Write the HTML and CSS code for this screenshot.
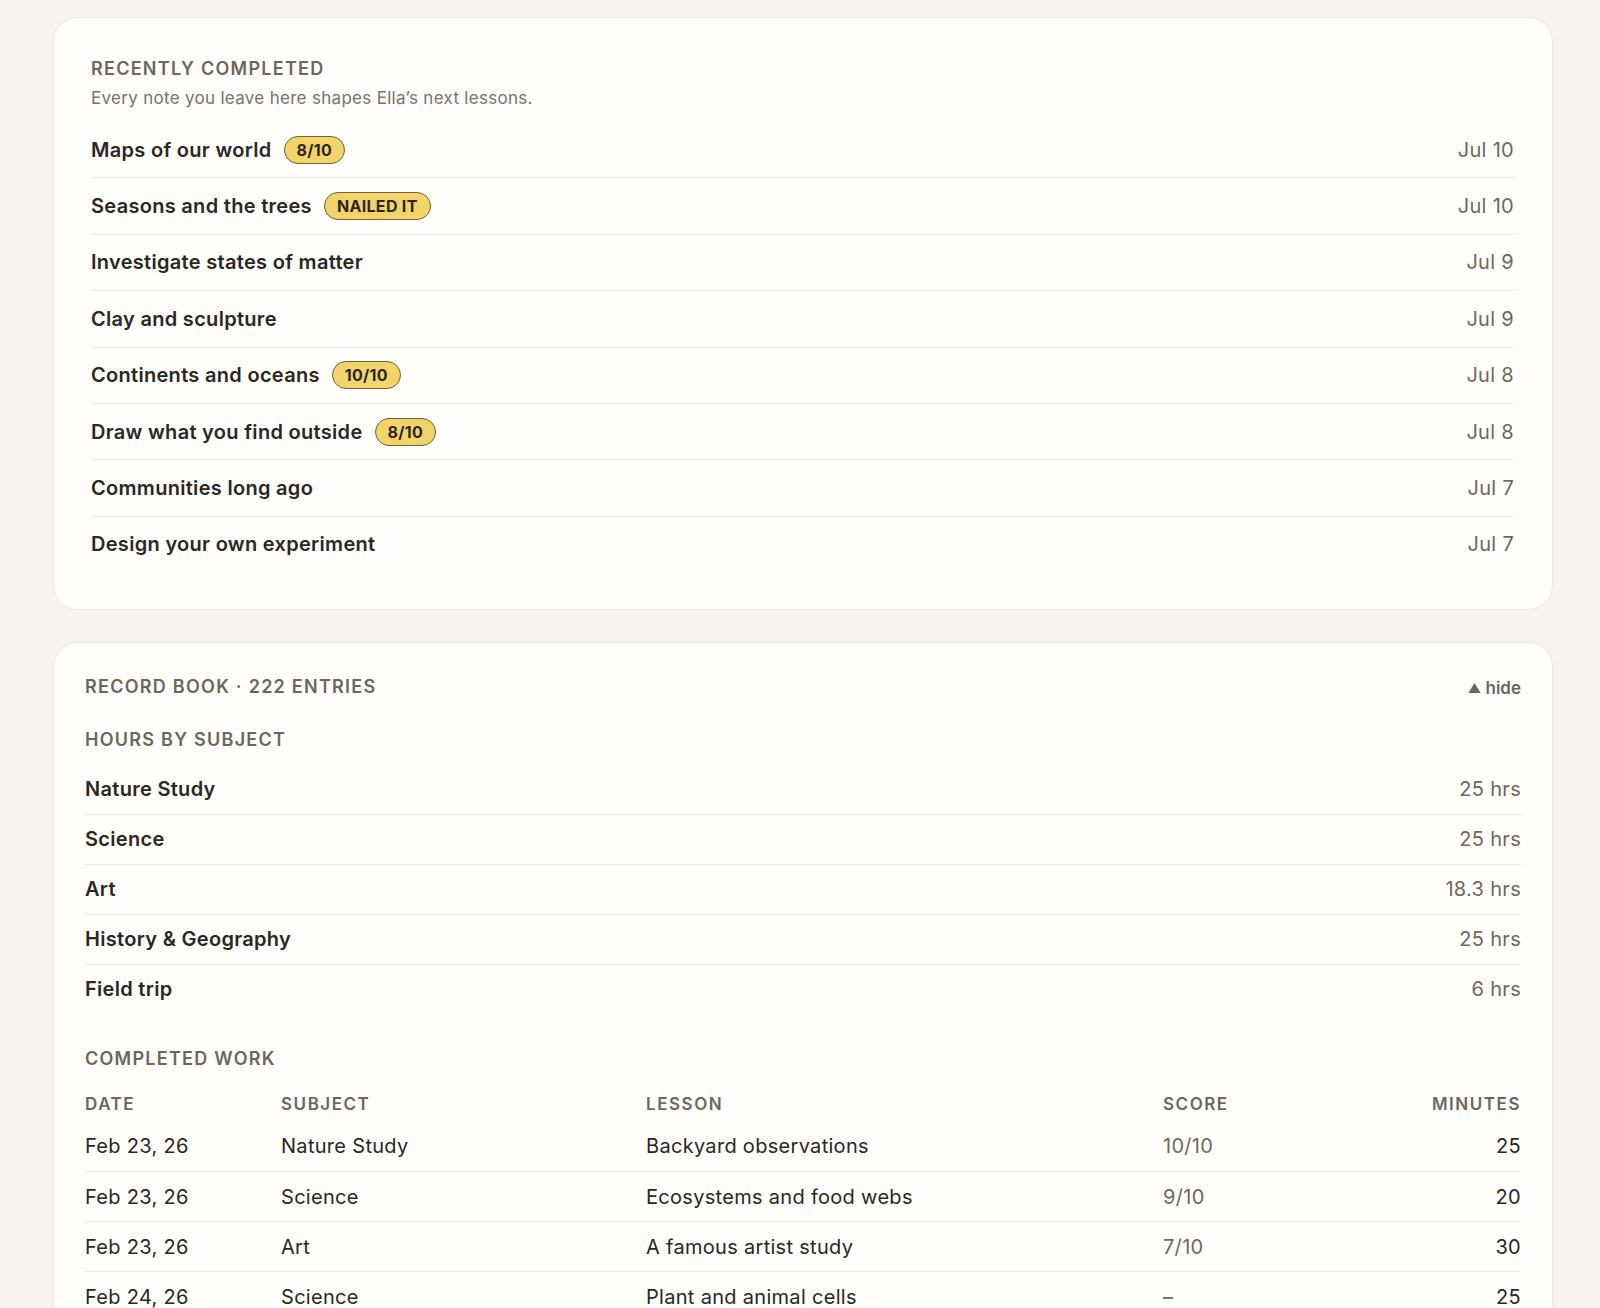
FILE: index.html
```html
<!DOCTYPE html>
<html lang="en">
<head>
    <meta charset="UTF-8">
    <meta name="viewport" content="width=device-width, initial-scale=1.0">
    <title>Ella's Record Book</title>
    <link rel="stylesheet" href="styles.css">
</head>
<body>
    <div class="page">
        <section class="card recent">
            <h2 class="label">Recently completed</h2>
            <p class="subtitle">Every note you leave here shapes Ella’s next lessons.</p>

            <ul class="lesson-list">
                <li>
                    <span class="lesson-title">Maps of our world <span class="badge">8/10</span></span>
                    <span class="lesson-date">Jul 10</span>
                </li>
                <li>
                    <span class="lesson-title">Seasons and the trees <span class="badge">NAILED IT</span></span>
                    <span class="lesson-date">Jul 10</span>
                </li>
                <li>
                    <span class="lesson-title">Investigate states of matter</span>
                    <span class="lesson-date">Jul 9</span>
                </li>
                <li>
                    <span class="lesson-title">Clay and sculpture</span>
                    <span class="lesson-date">Jul 9</span>
                </li>
                <li>
                    <span class="lesson-title">Continents and oceans <span class="badge">10/10</span></span>
                    <span class="lesson-date">Jul 8</span>
                </li>
                <li>
                    <span class="lesson-title">Draw what you find outside <span class="badge">8/10</span></span>
                    <span class="lesson-date">Jul 8</span>
                </li>
                <li>
                    <span class="lesson-title">Communities long ago</span>
                    <span class="lesson-date">Jul 7</span>
                </li>
                <li>
                    <span class="lesson-title">Design your own experiment</span>
                    <span class="lesson-date">Jul 7</span>
                </li>
            </ul>
        </section>

        <section class="card record">
            <div class="record-head">
                <h2 class="label">Record book · 222 entries</h2>
                <button class="hide-btn"><span class="arrow">▲</span> hide</button>
            </div>

            <h3 class="label sub-label">Hours by subject</h3>
            <ul class="hours-list">
                <li><span class="subject">Nature Study</span><span class="hours">25 hrs</span></li>
                <li><span class="subject">Science</span><span class="hours">25 hrs</span></li>
                <li><span class="subject">Art</span><span class="hours">18.3 hrs</span></li>
                <li><span class="subject">History &amp; Geography</span><span class="hours">25 hrs</span></li>
                <li><span class="subject">Field trip</span><span class="hours">6 hrs</span></li>
            </ul>

            <h3 class="label work-label">Completed work</h3>
            <table class="work-table">
                <thead>
                    <tr>
                        <th class="col-date">Date</th>
                        <th class="col-subject">Subject</th>
                        <th class="col-lesson">Lesson</th>
                        <th class="col-score">Score</th>
                        <th class="col-min">Minutes</th>
                    </tr>
                </thead>
                <tbody>
                    <tr>
                        <td>Feb 23, 26</td>
                        <td>Nature Study</td>
                        <td>Backyard observations</td>
                        <td class="score">10/10</td>
                        <td class="min">25</td>
                    </tr>
                    <tr>
                        <td>Feb 23, 26</td>
                        <td>Science</td>
                        <td>Ecosystems and food webs</td>
                        <td class="score">9/10</td>
                        <td class="min">20</td>
                    </tr>
                    <tr>
                        <td>Feb 23, 26</td>
                        <td>Art</td>
                        <td>A famous artist study</td>
                        <td class="score">7/10</td>
                        <td class="min">30</td>
                    </tr>
                    <tr>
                        <td>Feb 24, 26</td>
                        <td>Science</td>
                        <td>Plant and animal cells</td>
                        <td class="score">–</td>
                        <td class="min">25</td>
                    </tr>
                </tbody>
            </table>
        </section>
    </div>
</body>
</html>
```

FILE: styles.css
```css
* {
    margin: 0;
    padding: 0;
    box-sizing: border-box;
}

body {
    font-family: 'Inter', 'Noto Sans', sans-serif;
    background: #f8f4ef;
    color: #2b2723;
}

.page {
    padding: 17px 47px 40px 53px;
    display: flex;
    flex-direction: column;
    gap: 32px;
}

.card {
    background: #fefdfa;
    border: 1px solid #eee7dc;
    border-radius: 24px;
}

.recent {
    padding: 38px 38px 37px 37px;
}

.record {
    padding: 31px 31px 30px 31px;
}

.label {
    font-size: 18px;
    line-height: 26px;
    font-weight: 600;
    letter-spacing: 0.07em;
    text-transform: uppercase;
    color: #6e665b;
}

.subtitle {
    margin-top: 4px;
    font-size: 17px;
    line-height: 24px;
    letter-spacing: 0.3px;
    color: #7a7368;
}

/* recently completed */

.lesson-list {
    list-style: none;
    margin-top: 12px;
}

.lesson-list li {
    height: 56.4px;
    display: flex;
    align-items: center;
    justify-content: space-between;
    border-bottom: 1px solid #efe8de;
}

.lesson-list li:last-child {
    border-bottom: none;
    height: 55px;
}

.lesson-title {
    display: flex;
    align-items: center;
    gap: 12px;
    font-size: 20px;
    font-weight: 600;
    letter-spacing: 0.3px;
}

.lesson-date {
    font-size: 20px;
    letter-spacing: 0.3px;
    color: #6f685d;
}

.badge {
    display: inline-flex;
    align-items: center;
    height: 28px;
    padding: 0 12px;
    border: 1px solid #6f6237;
    border-radius: 999px;
    background: #f2d46b;
    font-size: 16px;
    font-weight: 700;
    letter-spacing: 0.02em;
    color: #2b2723;
}

/* record book */

.record-head {
    display: flex;
    justify-content: space-between;
    align-items: center;
}

.hide-btn {
    border: none;
    background: none;
    font-family: inherit;
    font-size: 17px;
    font-weight: 600;
    color: #6e665b;
    cursor: pointer;
    margin-top: 3px;
}

.hide-btn .arrow {
    font-size: 13px;
    vertical-align: 1px;
}

.sub-label {
    margin-top: 27px;
}

.hours-list {
    list-style: none;
    margin-top: 12px;
}

.hours-list li {
    height: 50px;
    display: flex;
    align-items: center;
    justify-content: space-between;
    border-bottom: 1px solid #efe8de;
    font-size: 20px;
    letter-spacing: 0.3px;
}

.hours-list li:last-child {
    border-bottom: none;
    height: 49px;
}

.subject {
    font-weight: 600;
}

.hours {
    color: #6f685d;
}

.work-label {
    margin-top: 32px;
}

.work-table {
    width: 100%;
    margin-top: 19px;
    border-collapse: collapse;
    table-layout: fixed;
}

.work-table th {
    text-align: left;
    font-size: 17px;
    line-height: 26px;
    font-weight: 600;
    letter-spacing: 0.09em;
    text-transform: uppercase;
    color: #6e665b;
    padding-bottom: 5px;
}

.col-date { width: 196px; }
.col-subject { width: 365px; }
.col-lesson { width: 517px; }

.work-table th.col-min,
.work-table td.min {
    text-align: right;
}

.work-table td {
    height: 50px;
    font-size: 20px;
    letter-spacing: 0.3px;
    border-bottom: 1px solid #efe8de;
}

.work-table td.score {
    color: #6f685d;
}
```
